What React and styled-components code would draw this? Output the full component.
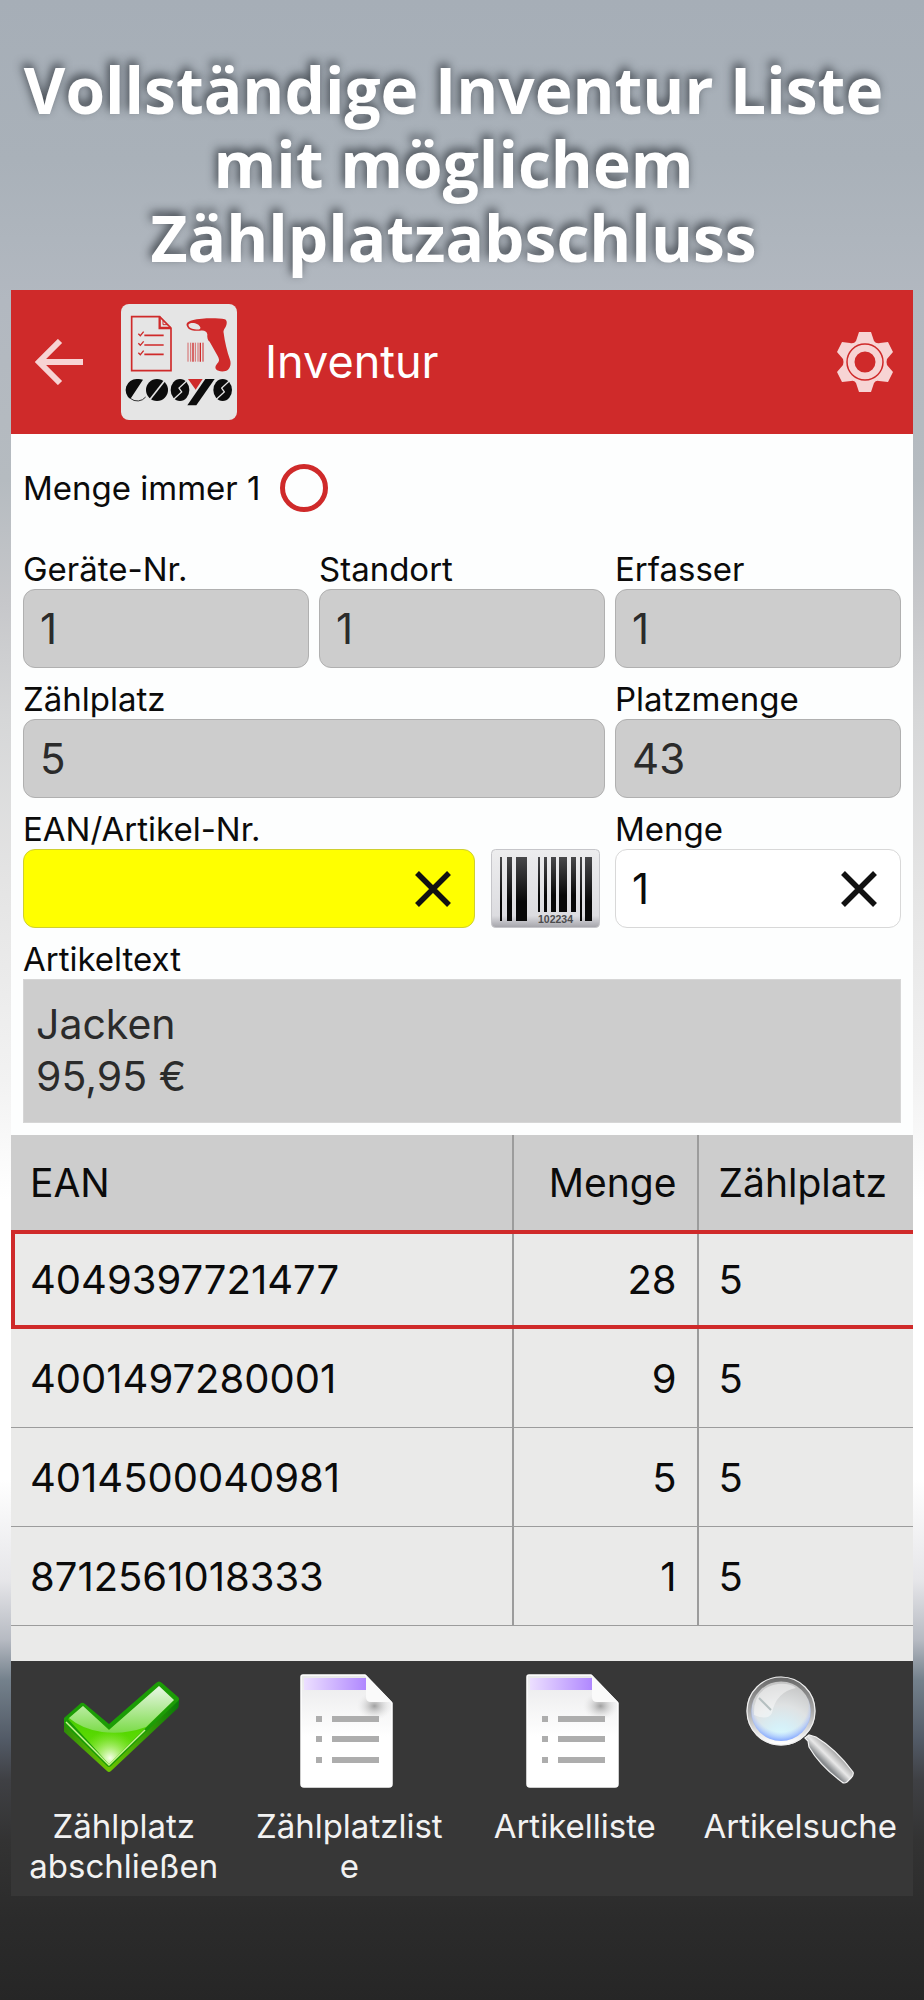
import React, { useState } from "react";
import styled, { createGlobalStyle, css } from "styled-components";

const RED = "#cf2a2a";
const GRAY = "#cdcdcd";
const LINE = "#9c9c9c";

const GlobalStyle = createGlobalStyle`
  * {
    box-sizing: border-box;
  }
  body {
    margin: 0;
    background: #272727;
    font-family: Inter, "Liberation Sans", sans-serif;
    color: #0b0b0b;
  }
  button, input, textarea {
    font-family: inherit;
    margin: 0;
  }
`;

const Page = styled.div`
  min-height: 100vh;
  padding: 0 11px 104px;
  background: linear-gradient(
    180deg,
    #a6aeb7 0%,
    #a9b1b9 8%,
    #b2b8c0 15%,
    #b5bbc0 24%,
    #c6c7ca 30%,
    #d6d7d8 36%,
    #e4e4e4 44%,
    #f2f2f2 54%,
    #ffffff 60%,
    #ffffff 74%,
    #e6e6e9 79%,
    #b6bac2 82%,
    #74818c 84%,
    #525a66 87%,
    #3f4044 89%,
    #333333 92%,
    #2b2b2b 96%,
    #262626 100%
  );
`;

const Headline = styled.h1`
  margin: 0;
  padding: 53px 17px 15px 0;
  font-family: "Open Sans", "Noto Sans", sans-serif;
  font-size: 64px;
  line-height: 74px;
  font-weight: 700;
  text-align: center;
  color: #fff;
  text-shadow: -2px -4px 10px rgba(30, 35, 42, 0.75);
`;

const Screen = styled.main`
  background: #fdfefe;
`;

const Header = styled.header`
  display: flex;
  align-items: center;
  height: 144px;
  padding: 0 20px 0 24px;
  background: ${RED};
`;

const IconButton = styled.button`
  display: flex;
  align-items: center;
  justify-content: center;
  flex: none;
  padding: 0;
  border: 0;
  background: none;
  cursor: pointer;
`;

const LogoBox = styled.div`
  display: flex;
  margin: 0 28px 0 38px;
`;

const Title = styled.h2`
  flex: 1;
  margin: 0;
  font-size: 45px;
  line-height: 56px;
  font-weight: 400;
  color: #fff;
`;

const Form = styled.form`
  padding: 0 12px 12px;
`;

const Toggle = styled.label`
  display: flex;
  align-items: center;
  gap: 20px;
  height: 108px;
  margin-bottom: 7px;
  font-size: 33px;
  line-height: 40px;
`;

const Round = styled.input`
  appearance: none;
  width: 48px;
  height: 48px;
  border: 5px solid ${RED};
  border-radius: 50%;
  &:checked {
    background: radial-gradient(${RED} 45%, #fff 50%);
  }
`;

const Grid = styled.div`
  display: grid;
  grid-template-columns: repeat(3, minmax(0, 1fr));
  gap: 11px 10px;
`;

const Field = styled.div`
  grid-column: span ${(props) => props.$span || 1};
  min-width: 0;
`;

const Label = styled.label`
  display: block;
  font-size: 33px;
  line-height: 40px;
`;

const Row = styled.div`
  display: flex;
  gap: 16px;
  padding-right: 5px;
`;

const Box = styled.div`
  display: flex;
  flex: 1;
  height: 79px;
  min-width: 0;
  overflow: hidden;
  border: 1px solid ${(props) => props.$line || "#b0b0b0"};
  border-radius: 12px;
  background: ${(props) => props.$bg || GRAY};
`;

const Input = styled.input`
  flex: 1;
  width: 100%;
  min-width: 0;
  padding: 0 16px;
  border: 0;
  outline: 0;
  background: none;
  font-size: 42px;
  color: ${(props) => (props.readOnly ? "#2b2b2b" : "#0b0b0b")};
`;

const Clear = styled(IconButton)`
  width: 82px;
`;

const TextArea = styled.textarea`
  display: block;
  width: 100%;
  height: 144px;
  padding: 18px 12px;
  border: 1px solid #d6d6d6;
  outline: 0;
  resize: none;
  background: ${GRAY};
  font-size: 41px;
  line-height: 52px;
  color: #2b2b2b;
`;

const TableArea = styled.div`
  padding-bottom: 35px;
  background: #eaeae9;
`;

const Table = styled.table`
  width: 100%;
  table-layout: fixed;
  border-spacing: 0;
  line-height: 48px;
`;

const cell = css`
  padding: 0 20px 0 ${(props) => (props.$first ? "19px" : "22px")};
  font-weight: 400;
  text-align: ${(props) => (props.$right ? "right" : "left")};
`;

const Th = styled.th`
  ${cell}
  height: 95px;
  padding-right: ${(props) => (props.$right ? "20px" : "0")};
  font-size: 39px;
  background: ${GRAY};
  box-shadow: inset ${(props) => (props.$first ? 0 : 2)}px 0 0 ${LINE};
`;

const Td = styled.td`
  ${cell}
  height: 99px;
  font-size: 40px;
  box-shadow: ${(props) =>
    props.$active
      ? `inset 0 4px 0 ${RED}, inset 0 -4px 0 ${RED}, inset ${props.$first ? `4px 0 0 ${RED}` : `2px 0 0 ${LINE}`}`
      : `inset 0 -1px 0 ${LINE}, inset ${props.$first ? 0 : 2}px 0 0 ${LINE}`};
`;

const EanCol = styled.col`
  width: 55.5%;
`;

const CountCol = styled.col`
  width: 20.5%;
`;

const Footer = styled.nav`
  display: grid;
  grid-template-columns: repeat(4, minmax(0, 1fr));
  background: #373737;
`;

const Action = styled.button`
  display: flex;
  flex-direction: column;
  align-items: center;
  gap: 16px;
  padding: 9px 14px 10px;
  border: 0;
  background: none;
  font-size: 33px;
  line-height: 40px;
  color: #f2f2f2;
  overflow-wrap: anywhere;
  cursor: pointer;
`;

const ActionText = styled.span`
  max-width: 100%;
`;

const BackIcon = () => (
  <svg width="48" height="46" viewBox="0 0 48 46" fill="none" stroke="#f7d4d4" strokeWidth="6">
    <path d="M48 23H5M25 2L4 23l21 21" />
  </svg>
);

const GearIcon = () => (
  <svg width="56" height="60" viewBox="0 0 56 60">
    <path
      fill="#f7d4d4"
      fillRule="evenodd"
      d="M22 0h12l3 9q2 3 6 2l8-1 5 10-6 7q-1 3 0 6l6 7-5 10-9-1q-3-1-5 2l-3 9H22l-3-9q-2-3-5-2l-9 1-5-10 6-7q1-3 0-6l-6-7 5-10 8 1q4 1 6-2zM28 19.500a10.500 10.500 0 1 0 0 21 10.500 10.500 0 0 0 0-21z"
    />
    <circle cx="28" cy="30" r="18" fill="none" stroke={RED} strokeWidth="1.5" />
  </svg>
);

const CrossIcon = () => (
  <svg width="36" height="36" viewBox="0 0 36 36" stroke="#111" strokeWidth="5.5">
    <path d="M2 2l32 32M34 2L2 34" />
  </svg>
);

const Logo = () => (
  <svg width="116" height="116" viewBox="10 13 348 348" role="img" aria-label="COSYS">
    <rect x="10" y="13" width="348" height="348" rx="24" fill="#e5e5e5" />
    <g fill="none" stroke={RED} strokeWidth="5">
      <path d="M42 51h84l34 34v128H42z" />
      <path d="M126 51v34h34" strokeWidth="7" />
      <path d="M136 62v13h14z" strokeWidth="3" />
      <path d="M80 107h58M80 136h58M80 164h58" />
      <path d="M62 102l6 6 10-12M62 131l6 6 10-12M62 159l6 6 10-12" strokeWidth="4" />
      <path d="M211 129v57M219 129v57M233 129v57M241 129v57" strokeWidth="2" />
      <path d="M226 129v57M248 129v57" strokeWidth="4" />
      <path d="M256 129v57" strokeWidth="3" />
    </g>
    <path
      fill={RED}
      fillRule="evenodd"
      d="M208 70c6-8 22-11 45-13 25-2 55-1 68 2 7 2 8 12 4 20-3 8-9 12-7 21 3 25 10 55 19 80 5 15-1 30-13 34-10 3-24 1-29-5-5-8 2-15 7-21 4-6 2-11-2-19l-24-43c-6-3-8-13-7-22-2-10-10-13-22-11-13 1-31 0-36-8-4-6-6-10-3-15zM213 74c-3 8 8 14 18 15s19 2 17-6c-3-12-27-18-35-9z"
    />
    {/* discs of the word mark, cut by slanted strokes */}
    <g fill="#0c0c0c">
      <path d="M76 240L38 298A33 33 0 0 1 58 238q10-1 18 2z" />
      <ellipse cx="118" cy="271" rx="33" ry="33" />
      <ellipse cx="187" cy="271" rx="28" ry="33" />
      <ellipse cx="315" cy="271" rx="28" ry="33" />
    </g>
    <path d="M84 292a32 32 0 0 1-46 4" fill="none" stroke="#333" strokeWidth="3" />
    <g fill="none" stroke="#e5e5e5" strokeWidth="4">
      <path d="M143 240l-48 62" strokeWidth="5" />
      <path d="M206 245l-22 20 8 12-24 22M334 245l-22 20 8 12-24 22" />
    </g>
    <path d="M263 238h28l-55 79h-27z" fill="#0c0c0c" />
    <path d="M211 238h44l-21 32z" fill={RED} />
  </svg>
);

const BARS = [
  [9, 2, 64], [16, 5, 64], [25, 11, 64], [47, 2, 55], [53, 3, 55], [60, 5, 55],
  [68, 8, 55], [80, 5, 55], [89, 2, 64], [94, 7, 64],
];

const BarcodeIcon = () => (
  <svg width="109" height="79" viewBox="0 0 109 79">
    <defs>
      <linearGradient id="plate" x2="0" y2="1">
        <stop offset="0" stopColor="#ededee" />
        <stop offset=".85" stopColor="#dcdce0" />
        <stop offset="1" stopColor="#a4a4aa" />
      </linearGradient>
      <linearGradient id="bar" x2="0" y2="1">
        <stop offset="0" stopColor="#48484a" />
        <stop offset=".7" stopColor="#080808" />
      </linearGradient>
    </defs>
    <rect x=".5" y=".5" width="108" height="78" rx="4" fill="url(#plate)" stroke="#c6c6ca" />
    {BARS.map(([x, w, h]) => (
      <rect key={x} x={x} y="8" width={w} height={h} fill="url(#bar)" />
    ))}
    <text x="47" y="74" fontFamily="Liberation Sans" fontWeight="700" fontSize="10.5" fill="#4a4a4c">
      102234
    </text>
  </svg>
);

const CheckIcon = () => (
  <svg width="120" height="120" viewBox="2 0 120 120">
    <defs>
      <linearGradient id="checkFill" x2="0" y2="1">
        <stop offset="0" stopColor="#2fae10" />
        <stop offset=".6" stopColor="#56d800" />
        <stop offset="1" stopColor="#6fdc20" />
      </linearGradient>
      <linearGradient id="checkSide" x2="1">
        <stop offset="0" stopColor="#2b8a08" />
        <stop offset=".4" stopColor="#6cc400" />
        <stop offset="1" stopColor="#087a08" />
      </linearGradient>
      <linearGradient id="checkShine" x2="0" y2="1">
        <stop offset="0" stopColor="#fff" />
        <stop offset="1" stopColor="#7fdc50" />
      </linearGradient>
      <radialGradient id="checkGlow" cx="48" cy="88" r="28" gradientUnits="userSpaceOnUse">
        <stop offset="0" stopColor="#f6ffe8" />
        <stop offset="1" stopColor="#9cf040" stopOpacity="0" />
      </radialGradient>
    </defs>
    <path d="M0 51v9l45 41q2 2 4 0l67-63q1-2 1-9L47 90z" fill="url(#checkSide)" />
    <path d="M1 49l18-16q2-1 4 1l24 20 47-41q3-3 6 0l16 14q2 2 0 4L49 96q-2 2-4 0L1 53q-2-2 0-4z" fill="#1c9c06" />
    <path d="M6 49l15-13 26 24 50-44 15 14-65 64z" fill="url(#checkFill)" />
    <path d="M6 49l15-13 26 24 50-44 15 14-65 64z" fill="url(#checkGlow)" />
    <path d="M7 48l14-12 26 24 50-44 15 14-28 27q-22 8-44 5-20-3-33-14z" fill="url(#checkShine)" opacity=".9" />
    <path d="M4 52l43 43 36-35" fill="none" stroke="#c9f58e" strokeWidth="1.5" />
  </svg>
);

const ListIcon = ({ id }) => (
  <svg width="120" height="120" viewBox="2 0 120 120">
    <defs>
      <linearGradient id={`${id}Page`} x2="0" y2="1">
        <stop offset="0" stopColor="#e9e9ea" />
        <stop offset=".55" stopColor="#fff" />
      </linearGradient>
      <linearGradient id={`${id}Bar`}>
        <stop offset="0" stopColor="#ecdfff" />
        <stop offset="1" stopColor="#b088ff" />
      </linearGradient>
      <radialGradient id={`${id}Shade`}>
        <stop offset="0" stopColor="#8a8a8a" stopOpacity=".8" />
        <stop offset="1" stopColor="#ddd" stopOpacity="0" />
      </radialGradient>
    </defs>
    <path d="M16 5h62l27 28v81q0 3-3 3H17q-3 0-3-3V7q0-2 2-2z" fill={`url(#${id}Page)`} stroke="#fff" strokeWidth="1.5" />
    <path d="M17 8h62v12H17z" fill={`url(#${id}Bar)`} />
    <path d="M70 22h35v28H70z" fill={`url(#${id}Shade)`} />
    <path d="M79 5l26 27H84q-5 0-5-5z" fill="#fafafa" />
    <g fill="#adadad">
      <path d="M45 46h47v6H45zM45 66h47v6H45zM45 87h47v6H45z" />
      <path d="M29 46h6v6h-6zM29 66h6v6h-6zM29 87h6v6h-6z" />
    </g>
  </svg>
);

const SearchIcon = () => (
  <svg width="120" height="120" viewBox="0 0 120 120">
    <defs>
      <radialGradient id="glass" cx=".5" cy=".95" r=".9">
        <stop offset="0" stopColor="#d8fbff" />
        <stop offset=".25" stopColor="#d6f0f8" />
        <stop offset=".6" stopColor="#dfe2e3" />
        <stop offset="1" stopColor="#c4c4c4" />
      </radialGradient>
      <radialGradient id="glassEdge" cx=".5" cy=".4" r=".6">
        <stop offset=".75" stopColor="#a9bfff" stopOpacity="0" />
        <stop offset="1" stopColor="#84a8ff" />
      </radialGradient>
      <linearGradient id="ring" x2="0" y2="1">
        <stop offset="0" stopColor="#6c6c6c" />
        <stop offset=".5" stopColor="#a9a9a9" />
        <stop offset="1" stopColor="#fff" />
      </linearGradient>
      <linearGradient id="handle" x1="76" y1="98" x2="94" y2="80" gradientUnits="userSpaceOnUse">
        <stop offset="0" stopColor="#f2f2f2" />
        <stop offset=".35" stopColor="#85888b" />
        <stop offset=".65" stopColor="#e8e8e8" />
        <stop offset="1" stopColor="#a2a2a2" />
      </linearGradient>
    </defs>
    <circle cx="41" cy="41" r="32" fill="url(#glass)" stroke="url(#ring)" strokeWidth="5" />
    <circle cx="41" cy="41" r="30" fill="url(#glassEdge)" />
    <circle cx="41" cy="41" r="34" fill="none" stroke="#eee" strokeWidth="1.2" />
    <path d="M14 45Q13 18 38 14q12-1 18 4-20 4-24 25-4 8-18 2z" fill="#fff" opacity=".45" />
    <path d="M19 28l12 12" stroke="#b5bfc0" strokeWidth="2" />
    <path d="M65 68l4-3 7 2q20 12 37 35 1 3-2 6l-4 4q-3 2-5 0Q80 96 69 77l-1-6z" fill="url(#handle)" stroke="#f4f4f4" strokeWidth="1.2" />
  </svg>
);

const ROWS = [
  { ean: "4049397721477", count: 28, place: 5 },
  { ean: "4001497280001", count: 9, place: 5 },
  { ean: "4014500040981", count: 5, place: 5 },
  { ean: "8712561018333", count: 1, place: 5 },
];

const ACTIONS = [
  { text: "Zählplatz abschließen", icon: <CheckIcon /> },
  { text: "Zählplatzliste", icon: <ListIcon id="places" /> },
  { text: "Artikelliste", icon: <ListIcon id="articles" /> },
  { text: "Artikelsuche", icon: <SearchIcon /> },
];

const ReadOnlyField = ({ id, label, value, span }) => (
  <Field $span={span}>
    <Label htmlFor={id}>{label}</Label>
    <Box>
      <Input id={id} value={value} readOnly />
    </Box>
  </Field>
);

const App = () => {
  const [always, setAlways] = useState(false);
  const [ean, setEan] = useState("");
  const [count, setCount] = useState("1");
  const [active, setActive] = useState(0);

  return (
    <Page>
      <GlobalStyle />
      <Headline>Vollständige Inventur Liste mit möglichem Zählplatzabschluss</Headline>
      <Screen>
        <Header>
          <IconButton aria-label="Zurück">
            <BackIcon />
          </IconButton>
          <LogoBox>
            <Logo />
          </LogoBox>
          <Title>Inventur</Title>
          <IconButton aria-label="Einstellungen">
            <GearIcon />
          </IconButton>
        </Header>

        <Form onSubmit={(e) => e.preventDefault()}>
          <Toggle>
            Menge immer 1
            <Round type="checkbox" checked={always} onChange={(e) => setAlways(e.target.checked)} />
          </Toggle>
          <Grid>
            <ReadOnlyField id="device" label="Geräte-Nr." value="1" />
            <ReadOnlyField id="site" label="Standort" value="1" />
            <ReadOnlyField id="user" label="Erfasser" value="1" />
            <ReadOnlyField id="place" label="Zählplatz" value="5" span={2} />
            <ReadOnlyField id="placeCount" label="Platzmenge" value="43" />
            <Field $span={2}>
              <Label htmlFor="ean">EAN/Artikel-Nr.</Label>
              <Row>
                <Box $bg="#ffff00" $line="#cfcf30">
                  <Input id="ean" value={ean} onChange={(e) => setEan(e.target.value)} />
                  <Clear type="button" aria-label="EAN löschen" onClick={() => setEan("")}>
                    <CrossIcon />
                  </Clear>
                </Box>
                <IconButton type="button" aria-label="Barcode scannen">
                  <BarcodeIcon />
                </IconButton>
              </Row>
            </Field>
            <Field>
              <Label htmlFor="count">Menge</Label>
              <Box $bg="#fff" $line="#d8d8d8">
                <Input id="count" value={count} onChange={(e) => setCount(e.target.value)} />
                <Clear type="button" aria-label="Menge löschen" onClick={() => setCount("")}>
                  <CrossIcon />
                </Clear>
              </Box>
            </Field>
            <Field $span={3}>
              <Label htmlFor="article">Artikeltext</Label>
              <TextArea id="article" value={"Jacken\n95,95 €"} readOnly />
            </Field>
          </Grid>
        </Form>

        <TableArea>
          <Table>
            <colgroup>
              <EanCol />
              <CountCol />
              <col />
            </colgroup>
            <thead>
              <tr>
                <Th $first>EAN</Th>
                <Th $right>Menge</Th>
                <Th>Zählplatz</Th>
              </tr>
            </thead>
            <tbody>
              {ROWS.map((row, i) => (
                <tr key={row.ean} onClick={() => setActive(i)}>
                  <Td $first $active={i === active}>{row.ean}</Td>
                  <Td $right $active={i === active}>{row.count}</Td>
                  <Td $active={i === active}>{row.place}</Td>
                </tr>
              ))}
            </tbody>
          </Table>
        </TableArea>

        <Footer>
          {ACTIONS.map(({ text, icon }) => (
            <Action key={text} type="button">
              {icon}
              <ActionText>{text}</ActionText>
            </Action>
          ))}
        </Footer>
      </Screen>
    </Page>
  );
};

export default App;
